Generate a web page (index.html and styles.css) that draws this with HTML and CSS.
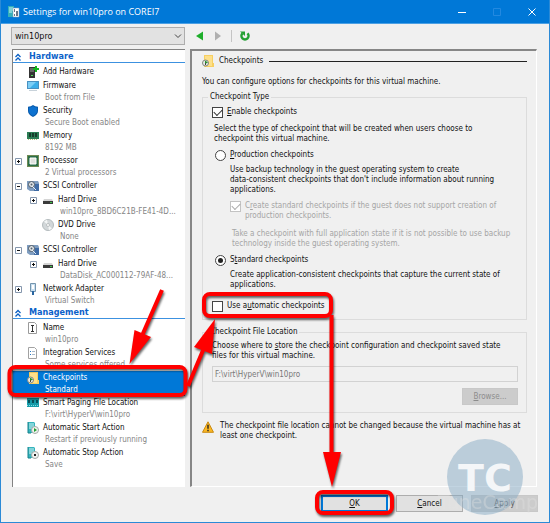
FILE: index.html
```html
<!DOCTYPE html>
<html lang="en">
<head>
  <meta charset="UTF-8">
  <meta name="viewport" content="width=device-width, initial-scale=1.0">
  <title>Settings for win10pro on COREI7</title>
  <link rel="stylesheet" href="styles.css">
</head>
<body>

  <!-- shared icons -->
  <svg class="defs" width="0" height="0">
    <symbol id="plus" viewBox="0 0 7 7">
      <path d="M.5.5h6v6h-6z" fill="#fff" stroke="#8596ad"/>
      <path d="M2 3.5h3M3.500 2v3" stroke="#111"/>
    </symbol>
    <symbol id="minus" viewBox="0 0 7 7">
      <path d="M.5.5h6v6h-6z" fill="#fff" stroke="#8596ad"/>
      <path d="M2 3.5h3" stroke="#111"/>
    </symbol>
    <symbol id="chevrons" viewBox="0 0 8 8">
      <path d="M1.500 4 4 1.500 6.500 4M1.500 7.500 4 5l2.500 2.500" fill="none" stroke="#0a5fc4" stroke-width="1.300"/>
    </symbol>
    <symbol id="scsi" viewBox="0 0 12 12">
      <path d="M0 1h11l1 2v8H3L0 9z" fill="#7f9dc0"/>
      <path d="M8 4h4v7H7z" fill="#3f6ba5"/>
      <circle cx="4.500" cy="4.500" r="3" fill="#dfe4e8" stroke="#4e5a66"/>
      <circle cx="4.500" cy="4.500" r="1" fill="#56616c"/>
      <path d="m5 6 4 4" stroke="#e6edf4"/>
    </symbol>
    <symbol id="drive" viewBox="0 0 12 12">
      <path d="M2 5h8l1 2H1z" fill="#d5d5d5"/>
      <path d="M1 7h10v3H1z" fill="#3a3a3a"/>
      <path d="M8 8h2v1H8z" fill="#3fc94c"/>
    </symbol>
    <symbol id="folder" viewBox="0 0 12 12">
      <path d="M2 0h9v8h1v4H2z" fill="#f7cf62"/>
      <path d="M3 1h7v10H3z" fill="#fde08a"/>
      <circle cx="3.500" cy="8" r="3" fill="#e8ece8" stroke="#82867e"/>
      <path d="M3 5.500 6 7.500 3 9z" fill="#28922c"/>
      <path d="M3.500 8v2" stroke="#444"/>
    </symbol>
    <symbol id="server" viewBox="0 0 12 12">
      <path d="M1 0h6l1 1v10H1z" fill="#35b4bd"/>
      <path d="M2 2h5M2 4h5M2 6h3" stroke="#d3f4f5"/>
      <path d="M1 0v11h3" fill="none" stroke="#14818c"/>
      <circle cx="8" cy="8" r="3.500" fill="#f1f3f1" stroke="#a3aaa6"/>
    </symbol>
  </svg>

  <div class="dialog">
    <header class="titlebar">
      <svg class="app-icon" viewBox="0 0 12 12">
        <path d="M0 0h6v11H0z" fill="#35b0ba"/>
        <path d="M1 2h4M1 4h4M1 6h3" stroke="#c8f1f3"/>
        <path d="M5 2h6v9H5z" fill="#fff" stroke="#8ba0b4" stroke-width=".5"/>
        <path d="M6 3h1v3H6zM8 5h2v5H8zM6 8h1v2H6z" fill="#678"/>
      </svg>
      <h1>Settings for win10pro on COREI7</h1>
      <div class="window-buttons">
        <button aria-label="Minimize"><svg viewBox="0 0 10 10"><path d="M1 5.500h8" stroke="#fff"/></svg></button>
        <button aria-label="Maximize" disabled><svg viewBox="0 0 10 10"><path d="M1.500 1.500h7v7h-7z" fill="none" stroke="#2389e0"/></svg></button>
        <button aria-label="Close"><svg viewBox="0 0 10 10"><path d="m1.500 1.500 7 7m0-7-7 7" stroke="#fff"/></svg></button>
      </div>
    </header>

    <main class="content">
      <div class="machine">
        <select aria-label="Virtual machine"><option>win10pro</option></select>
        <svg viewBox="0 0 8 8"><path d="m1 2.500 3 3 3-3" fill="none" stroke="#444"/></svg>
      </div>

      <nav class="toolbar">
        <button aria-label="Back"><svg viewBox="0 0 10 10"><path d="M8 .5v9L1 5z" fill="#1fae2b"/></svg></button>
        <button aria-label="Forward" disabled><svg viewBox="0 0 10 10"><path d="M2 .5v9L8 5z" fill="#b0b0b0"/></svg></button>
        <span class="separator"></span>
        <button aria-label="Refresh"><svg viewBox="0 0 10 10"><path d="M2.500 2.300a3.600 3.600 0 1 0 5 0" fill="none" stroke="#23a033" stroke-width="2.400"/><path d="M0 .5h5v4.500z" fill="#23a033"/></svg></button>
      </nav>

      <section class="tree">
        <h2><svg class="chevrons"><use href="#chevrons"/></svg>Hardware</h2>
        <ul>
          <li>
            <svg class="icon" viewBox="0 0 12 12"><path d="M2 1h6v11H2z" fill="#333"/><path d="M3 3h4M3 5h4" stroke="#999"/><path d="M4 9h2v1H4z" fill="#55d85b"/><path d="M9 0v6M6 3h6" stroke="#15b51f" stroke-width="2"/></svg>
            <span>Add Hardware</span>
          </li>
          <li>
            <svg class="icon" viewBox="0 0 12 12"><path d="M0 1h12v8H0z" fill="#3daee9"/><path d="M.5 1.500h11v7H.5z" fill="none" stroke="#4a90c0"/><path d="M1 2h8L3 8H1z" fill="#7ccdf5"/><path d="M2 10.500h8" stroke="#c8d2da"/></svg>
            <span>Firmware</span><small>Boot from File</small>
          </li>
          <li>
            <svg class="icon" viewBox="0 0 12 12"><path d="M6 0q2 1.800 5 1.800V6q0 3.500-5 6Q1 9.500 1 6V1.800q3 0 5-1.800z" fill="#0a5cad"/><path d="M6 1.300q2 1.300 4 1.400V6q0 2.800-4 4.800Q2 8.800 2 6V2.700q2-.1 4-1.400z" fill="#0d72d0"/></svg>
            <span>Security</span><small>Secure Boot enabled</small>
          </li>
          <li>
            <svg class="icon" viewBox="0 0 12 12"><path d="M0 2h12v7H0z" fill="#2b7d54"/><path d="M2 3h2v4H2zM5 3h2v4H5zM8 3h2v4H8z" fill="#173c2a"/><path d="M1 9.500h10" stroke="#b5bd7a" stroke-dasharray="1 1"/></svg>
            <span>Memory</span><small>8192 MB</small>
          </li>
          <li>
            <svg class="expander"><use href="#plus"/></svg>
            <svg class="icon" viewBox="0 0 12 12"><path d="M0 0h12v12H0z" fill="#2b6e48"/><path d="M.5.5h11v11H.5z" fill="none" stroke="#b5a760" stroke-dasharray="1 1"/><path d="M3 3h6v6H3z" fill="#e0e2df" stroke="#fff"/></svg>
            <span>Processor</span><small>2 Virtual processors</small>
          </li>
          <li>
            <svg class="expander"><use href="#minus"/></svg>
            <svg class="icon"><use href="#scsi"/></svg>
            <span>SCSI Controller</span>
          </li>
          <li class="child">
            <svg class="expander"><use href="#plus"/></svg>
            <svg class="icon"><use href="#drive"/></svg>
            <span>Hard Drive</span><small>win10pro_8BD6C21B-FE41-4D...</small>
          </li>
          <li class="child">
            <svg class="icon" viewBox="0 0 12 12"><circle cx="6" cy="6" r="5.500" fill="#d2d7d9" stroke="#b4bbbd"/><path d="M6 6 2 2.500 5 .800zM6 6l4 3.500-3 1.700z" fill="#f4f6f6"/><circle cx="6" cy="6" r="1.500" fill="#fff" stroke="#a7adaf" stroke-width=".7"/></svg>
            <span>DVD Drive</span><small>None</small>
          </li>
          <li>
            <svg class="expander"><use href="#minus"/></svg>
            <svg class="icon"><use href="#scsi"/></svg>
            <span>SCSI Controller</span>
          </li>
          <li class="child">
            <svg class="expander"><use href="#plus"/></svg>
            <svg class="icon"><use href="#drive"/></svg>
            <span>Hard Drive</span><small>DataDisk_AC000112-79AF-48...</small>
          </li>
          <li>
            <svg class="expander"><use href="#plus"/></svg>
            <svg class="icon" viewBox="0 0 12 12"><path d="M3.500.5h5v8h-5z" fill="#c9dff0" stroke="#7495ae"/><path d="M5 2h2v4H5z" fill="#fff"/><path d="M6 8v4" stroke="#2865a0" stroke-width="2"/></svg>
            <span>Network Adapter</span><small>Virtual Switch</small>
          </li>
        </ul>
        <h2><svg class="chevrons"><use href="#chevrons"/></svg>Management</h2>
        <ul>
          <li>
            <svg class="icon" viewBox="0 0 12 12"><path d="M1.500.5h6l2 2v9h-8z" fill="#fff" stroke="#9a9a9a"/><path d="M4 3.500h3M4 9.500h3M5.500 3.500v6" stroke="#333"/></svg>
            <span>Name</span><small>win10pro</small>
          </li>
          <li>
            <svg class="icon" viewBox="0 0 12 12"><path d="M1.500.5h6l2 2v9h-8z" fill="#fff" stroke="#a2a2a2"/><path d="M3 4.500h1M3 7.500h1" stroke="#2478c8"/><path d="M5 4.500h3M5 7.500h3" stroke="#a9bac9"/></svg>
            <span>Integration Services</span><small>Some services offered</small>
          </li>
          <li class="selected">
            <svg class="icon"><use href="#folder"/></svg>
            <span>Checkpoints</span><small>Standard</small>
          </li>
          <li>
            <svg class="icon" viewBox="0 0 12 12"><path d="M0 1h12v9H0z" fill="#169aa8"/><path d="M1 3h2v3H1zM5 3h2v3H5zM9 3h2v3H9z" fill="#07505a"/><path d="M0 8.500h12" stroke="#7ce0e6" stroke-dasharray="1 1"/></svg>
            <span>Smart Paging File Location</span><small>F:\virt\HyperV\win10pro</small>
          </li>
          <li>
            <svg class="icon" viewBox="0 0 12 12"><use href="#server"/><path d="M7 6v4l3-2z" fill="#1f9f2f"/></svg>
            <span>Automatic Start Action</span><small>Restart if previously running</small>
          </li>
          <li>
            <svg class="icon" viewBox="0 0 12 12"><use href="#server"/><path d="M7 7h2v2H7z" fill="#222"/></svg>
            <span>Automatic Stop Action</span><small>Save</small>
          </li>
        </ul>
      </section>

      <section class="page">
        <h2 class="page-title"><svg class="icon"><use href="#folder"/></svg>Checkpoints</h2>
        <p class="intro">You can configure options for checkpoints for this virtual machine.</p>

        <fieldset class="type">
          <legend>Checkpoint Type</legend>
          <label class="option"><input type="checkbox" checked><span><u>E</u>nable checkpoints</span></label>
          <p class="hint">Select the type of checkpoint that will be created when users choose to<br>checkpoint this virtual machine.</p>
          <div class="choices">
            <label class="option"><input type="radio" name="type"><span><u>P</u>roduction checkpoints</span></label>
            <div class="details">
              <p>Use backup technology in the guest operating system to create<br>data-consistent checkpoints that don't include information about running<br>applications.</p>
              <label class="option fallback"><input type="checkbox" checked disabled><span>C<u>r</u>eate standard checkpoints if the guest does not support creation of<br>production checkpoints.</span></label>
              <p class="note">Take a checkpoint with full application state if it is not possible to use backup<br>technology inside the guest operating system.</p>
            </div>
            <label class="option"><input type="radio" name="type" checked><span>S<u>t</u>andard checkpoints</span></label>
            <div class="details">
              <p>Create application-consistent checkpoints that capture the current state of<br>applications.</p>
            </div>
          </div>
          <label class="option"><input type="checkbox"><span>Use a<u>u</u>tomatic checkpoints</span></label>
        </fieldset>

        <fieldset class="location">
          <legend>Checkpoint File Location</legend>
          <label for="path">Choose where to <u>s</u>tore the checkpoint configuration and checkpoint saved state<br>files for this virtual machine.</label>
          <input type="text" id="path" value="F:\virt\HyperV\win10pro" disabled>
          <button class="btn browse" disabled><u>B</u>rowse...</button>
        </fieldset>

        <div class="warning">
          <svg class="icon" viewBox="0 0 12 12"><path d="M6 .8 11.500 11.300H.5z" fill="#fbb724" stroke="#c98a12" stroke-linejoin="round"/><path d="M6 3.800v4M6 8.800v1.400" stroke="#222" stroke-width="1.400"/></svg>
          <p>The checkpoint file location cannot be changed because the virtual machine has at<br>least one checkpoint.</p>
        </div>
      </section>
    </main>

    <footer class="actions">
      <button class="btn primary"><u>O</u>K</button>
      <button class="btn"><u>C</u>ancel</button>
      <button class="btn" disabled><u>A</u>pply</button>
    </footer>
  </div>

  <!-- watermark and guide arrows, drawn over the dialog -->
  <svg class="overlay" width="550" height="523" viewBox="0 0 550 523">
    <g class="watermark">
      <circle cx="485" cy="477" r="38"/>
      <text class="monogram" x="485" y="491">TC</text>
      <text class="brand" x="488" y="509">TuneCamp</text>
    </g>
    <g class="guide">
      <rect x="9.500" y="367" width="176" height="28" rx="6"/>
      <rect x="204" y="294" width="127" height="22" rx="6"/>
      <rect x="317" y="492" width="75" height="21" rx="6"/>
      <path d="M162 290 141 338M188 386 204 348M331.500 315V456"/>
      <path class="head" d="M129.500 364 134.500 330 151 337zM215 319 212 354 194 347zM332 487 323 452h18z"/>
    </g>
  </svg>

</body>
</html>
```
FILE: styles.css
```css
* {
  box-sizing: border-box;
}

body {
  margin: 0;
  font: 8px/10px "DejaVu Sans Condensed", "DejaVu Sans", sans-serif;
  color: #111;
  background: #f0f0f0;
}

h1, h2, p, ul, fieldset {
  margin: 0;
  padding: 0;
}

button, input, select {
  margin: 0;
  font: inherit;
  color: inherit;
}

svg {
  display: block;
}

.defs {
  position: absolute;
}

.dialog {
  display: flex;
  flex-direction: column;
  min-height: 100vh;
  border: 1px solid #2b8ad6;
  border-top: 0;
}

/* title bar */
.titlebar {
  display: flex;
  align-items: center;
  height: 24px;
  padding-left: 7px;
  color: #fff;
  background: #0078d7;
  border-bottom: 1px solid #4ba0e4;
}

.titlebar h1 {
  flex: 1;
  margin-left: 3px;
  font: 9px/12px "Open Sans", "Noto Sans", sans-serif;
}

.app-icon,
.icon {
  width: 12px;
  height: 12px;
}

.window-buttons {
  display: flex;
}

.window-buttons button {
  display: flex;
  justify-content: center;
  width: 35px;
  padding: 0;
  border: 0;
  background: none;
}

.window-buttons svg {
  width: 10px;
  height: 10px;
}

/* main area */
.content {
  flex: 1;
  display: grid;
  grid-template-columns: 174px 1fr;
  grid-template-rows: 18px 1fr;
  gap: 4px 5px;
  padding: 3px 12px 0 10px;
}

.machine {
  display: grid;
  align-items: center;
}

.machine select,
.machine svg {
  grid-area: 1 / 1;
}

.machine select {
  height: 18px;
  padding: 0 3px;
  font-size: 9px;
  border: 1px solid #adadad;
  border-radius: 0;
  background: #e2e2e2;
  appearance: none;
}

.machine svg {
  justify-self: end;
  width: 8px;
  height: 8px;
  margin-right: 3px;
  pointer-events: none;
}

.toolbar {
  display: flex;
  align-items: center;
  gap: 8px;
  padding-left: 5px;
}

.toolbar button {
  padding: 0;
  border: 0;
  background: none;
}

.toolbar svg {
  width: 10px;
  height: 10px;
}

.separator {
  height: 12px;
  border-left: 1px solid #c4c4c4;
}

/* settings tree */
.tree {
  margin-left: 1px;
  padding-top: 1px;
  background: #fff;
  border-top: 1px solid #828282;
  border-left: 1px solid #828282;
}

.tree h2 {
  display: flex;
  align-items: center;
  height: 12px;
  margin-bottom: 2px;
  padding-left: 1px;
  font-size: 9px;
  line-height: 11px;
  color: #0b62c9;
  border-bottom: 1px solid #3c91e0;
}

.chevrons {
  width: 8px;
  height: 8px;
  margin-right: 7px;
}

.tree ul {
  list-style: none;
}

.tree li {
  display: grid;
  grid-template-columns: 10px 12px 1fr;
  column-gap: 2px;
  padding-left: 2px;
}

.tree .child {
  padding-left: 17px;
}

.expander {
  grid-area: 1 / 1;
  align-self: center;
  width: 7px;
  height: 7px;
}

.tree .icon {
  grid-area: 1 / 2;
  align-self: center;
}

.tree span {
  grid-area: 1 / 3;
  padding-left: 2px;
  line-height: 14px;
}

.tree small {
  grid-area: 2 / 3;
  padding: 0 0 2px 4px;
  font-size: 8px;
  line-height: 9px;
  white-space: nowrap;
  color: #858585;
}

.tree .selected {
  background: #0078d7;
}

.selected span,
.tree .selected small {
  color: #fff;
}

/* checkpoints page */
.page {
  padding: 4px 9px 0 10px;
  border: 1px solid #fff;
  border-top: 2px solid #868686;
  border-left: 2px solid #868686;
}

.page-title {
  display: flex;
  align-items: center;
  font-size: 8px;
  font-weight: normal;
}

.page-title .icon {
  margin-right: 5px;
}

.page-title::after {
  content: "";
  flex: 1;
  margin-left: 6px;
  border-top: 1px solid #222;
}

.intro {
  margin: 10px 0 5px;
}

.page fieldset {
  min-width: 0;
  padding: 0 8px 0 9px;
  border: 1px solid #dcdcdc;
}

.page legend {
  margin-left: -4px;
  padding: 0 2px;
}

.option {
  display: flex;
  align-items: flex-start;
  gap: 4px;
}

.option input {
  flex: none;
  display: grid;
  place-items: center;
  width: 11px;
  height: 11px;
  border: 1px solid #444;
  background: #fff;
  appearance: none;
}

.option input[type="radio"] {
  border-radius: 50%;
}

.option input[type="radio"]:checked::before {
  content: "";
  width: 5px;
  height: 5px;
  border-radius: 50%;
  background: #222;
}

.option input[type="checkbox"]:checked::before {
  content: "";
  width: 7px;
  height: 4px;
  margin-bottom: 2px;
  border: solid #333;
  border-width: 0 0 1px 1px;
  transform: rotate(-45deg);
}

.option input[type="checkbox"]:disabled {
  border-color: #c3c3c3;
}

.option input[type="checkbox"]:disabled::before {
  border-color: #aaa;
}

.page .type {
  margin-bottom: 7px;
  padding-bottom: 2px;
}

.type > .option {
  margin: 5px 0;
}

.hint {
  margin: 6px 0 6px 2px;
}

.choices {
  margin-left: 3px;
}

.details {
  padding: 4px 0 6px 15px;
}

.fallback {
  margin: 6px 0 8px;
  color: #a5a5a5;
}

.note {
  margin-left: 2px;
  color: #a5a5a5;
}

.location {
  display: flex;
  flex-direction: column;
}

.location label {
  margin: 4px 0 5px;
}

.location input {
  height: 16px;
  padding: 0 2px;
  color: #777;
  border: 1px solid #d2d2d2;
  background: #f0f0f0;
}

.btn {
  width: 67px;
  height: 17px;
  padding: 0;
  border: 1px solid #adadad;
  background: #e1e1e1;
}

.btn:disabled {
  color: #8c8c8c;
  border-color: #c8c8c8;
  background: #ccc;
}

.location .browse {
  align-self: flex-end;
  width: 56px;
  margin: 6px 0 7px;
}

.warning {
  display: flex;
  gap: 6px;
  margin-top: 8px;
}

/* bottom buttons */
.actions {
  display: flex;
  justify-content: flex-end;
  gap: 8px;
  padding: 8px 11px 10px;
}

.actions .btn:disabled {
  color: #555;
}

.primary {
  border: 2px solid #0078d7;
}

/* overlay */
.overlay {
  position: absolute;
  top: 0;
  left: 0;
  pointer-events: none;
}

.watermark circle {
  fill: #85a9c3;
  opacity: .5;
}

.watermark text {
  text-anchor: middle;
  font-family: "DejaVu Sans", sans-serif;
}

.monogram {
  font-size: 38px;
  font-weight: bold;
  fill: #f4f6f8;
}

.brand {
  font-size: 19px;
  fill: #e4e4e4;
  opacity: .35;
}

.guide {
  fill: none;
  stroke: #f00;
  stroke-width: 4px;
  filter: drop-shadow(1px 2px 1px rgba(0, 0, 0, .6));
}

.guide .head {
  fill: #f00;
  stroke: none;
}
```
